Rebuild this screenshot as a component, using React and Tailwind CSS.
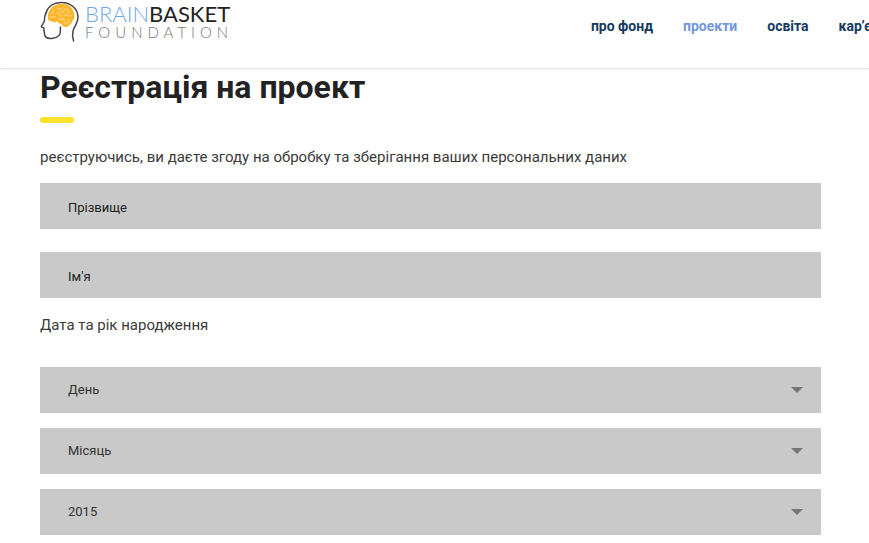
const navLinks = [
    { label: 'про фонд', href: '#about' },
    { label: 'проекти', href: '#projects', active: true },
    { label: 'освіта', href: '#education' },
    { label: 'кар’єра', href: '#career' },
];

const textFields = [
    { id: 'surname', label: 'Прізвище' },
    { id: 'name', label: 'Ім\'я' },
];

const dateFields = [
    { id: 'day', label: 'День', value: 'День' },
    { id: 'month', label: 'Місяць', value: 'Місяць' },
    { id: 'year', label: 'Рік', value: '2015' },
];

const HeadIcon = () => (
    <svg className="w-10 h-11 shrink-0" viewBox="0 0 40 44" fill="none" aria-hidden="true">
        {/* Face and neck */}
        <path
            d="M6 13C4 16 5 19 4.200 21.500C3.500 23.500 2 24.800 1.400 26.300C1.300 27.500 3.600 27.500 4 28.300C4.200 29.300 3.600 30 4 31C4.600 32 4.200 33 4.600 34.500C5.300 38.400 9 38.800 13 38.200C18 37.600 20.400 35 20.400 31V27"
            stroke="#4a4550" strokeWidth="1.500" strokeLinecap="round" strokeLinejoin="round"
        />
        <path
            d="M6 13C8 6 14 2.400 21 2.400C31 2.400 38 9 38 17C38 23 34 27 33 31C32.200 34.500 32.600 38 33.600 41"
            stroke="#4a4550" strokeWidth="1.500" strokeLinecap="round"
        />
        {/* Brain */}
        <path
            d="M8 19C7 14 10 7 16 5C19 3 24 3.500 26 4.500C30 5 33 8.500 33.700 12C35 15 34.500 19 32.500 21C31.500 24 29 25.500 27.500 26.800C25 27.300 22 27 21.500 24C19 23.800 18 22.500 17 21.500C14 22.500 12 22.500 11 21C9.500 21.200 8.500 20.400 8 19Z"
            fill="#fbb62c"
        />
        <path
            d="M11 13C13 14 14 12 13 10M17 8C18 10 20 9 22 8M10 17C12 18 13 16 15 17M17 13C20 14 19 17 22 16M20 12C23 13 25 11 24 9M27 8C28 10 27 12 29 13M25 15C27 14 28 17 31 16M19 19C21 20 23 18 25 20M28 20C29 19 30 21 29 23M24 23C25 22 26 24 27 23"
            stroke="#fff0c2" strokeWidth="0.800" strokeLinecap="round"
        />
    </svg>
);

const Header = () => (
    <header className="sticky top-0 z-10 h-[69px] flex items-start bg-white border-b border-gray-200 shadow-xs overflow-hidden">
        <a href="#home" className="flex shrink-0 pl-10 font-['Lato',sans-serif]">
            <HeadIcon />
            <span className="block pl-[5px] pt-1">
                <span className="block text-[22px] leading-5 whitespace-nowrap">
                    <span className="font-light text-[#6fa8e8]">BRAIN</span>
                    <span className="text-[#222222]">BASKET</span>
                </span>
                <span className="block text-[15px] leading-4 font-light tracking-[5px] text-[#777777]">
                    FOUNDATION
                </span>
            </span>
        </a>
        <nav className="w-[32%] ml-auto shrink-0 flex gap-[30px] pt-4 text-sm leading-5 font-bold whitespace-nowrap">
            {navLinks.map((link) => (
                <a
                    key={link.href}
                    href={link.href}
                    className={link.active ? 'text-[#7198dc]' : 'text-[#163a61]'}
                >
                    {link.label}
                </a>
            ))}
        </nav>
    </header>
);

const SelectField = ({ field }) => (
    <div className="relative">
        <select
            id={field.id}
            aria-label={field.label}
            className="block w-full h-[46px] px-7 appearance-none rounded-none bg-[#c9c9c9] text-[13px] text-[#333333]"
        >
            <option>{field.value}</option>
        </select>
        <svg
            className="absolute right-[18px] top-5 w-3 h-[6px] pointer-events-none"
            viewBox="0 0 12 6"
            aria-hidden="true"
        >
            <path d="M0 0H12L6 6Z" fill="#777777" />
        </svg>
    </div>
);

const App = () => {
    return (
        <div className="font-['Roboto',sans-serif] bg-white text-[#3a3a3a]">
            <Header />
            <main className="pl-10 pr-12 pb-2">
                <h1 className="text-[32px] leading-9 font-bold text-[#222222]">
                    Реєстрація на проект
                </h1>
                <div className="w-[34px] h-[6px] mt-3 rounded-full bg-[#fce02b]" />

                <form>
                    <p className="mt-6 text-[15px] leading-5">
                        реєструючись, ви даєте згоду на обробку та зберігання ваших персональних даних
                    </p>
                    <div className="mt-4 flex flex-col gap-[23px]">
                        {textFields.map((field) => (
                            <input
                                key={field.id}
                                id={field.id}
                                type="text"
                                aria-label={field.label}
                                placeholder={field.label}
                                className="block w-full h-[46px] px-7 pt-0.5 bg-[#c9c9c9] text-[13px] text-[#222222] placeholder:text-[#222222]"
                            />
                        ))}
                    </div>

                    <fieldset>
                        <legend className="pt-[17px] text-[15px] leading-5">Дата та рік народження</legend>
                        <div className="mt-8 flex flex-col gap-[15px]">
                            {dateFields.map((field) => (
                                <SelectField key={field.id} field={field} />
                            ))}
                        </div>
                    </fieldset>
                </form>
            </main>
        </div>
    );
};

export default App;
